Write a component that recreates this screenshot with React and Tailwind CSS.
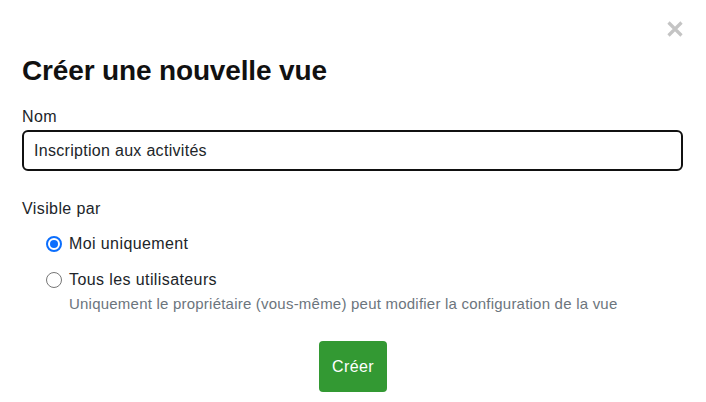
export default function App() {
  return (
    <div className="relative w-[706px] h-[402px] bg-white overflow-hidden" style={{ fontFamily: '"Liberation Sans", Arial, sans-serif' }}>
      <button className="absolute left-[665px] top-[19px] w-[20px] h-[20px] flex items-center justify-center">
        <svg width="18" height="18" viewBox="0 0 18 18">
          <path d="M2.5 2.5 L15.5 15.5 M15.5 2.5 L2.5 15.5" stroke="#c4c4c4" strokeWidth="3.2" strokeLinecap="butt" />
        </svg>
      </button>
      <div className="px-[22px] pt-[55px]">
        <h1 className="text-[28px] leading-[32px] font-bold text-[#111] tracking-[-0.15px]">Créer une nouvelle vue</h1>
        <label className="block mt-[20px] text-[16px] leading-[20px] text-[#212529] tracking-[0.4px]">Nom</label>
        <div className="mt-[3px] h-[41px] w-[661px] border-2 border-[#111] rounded-[6px] flex items-center px-[10px] text-[16px] text-[#212529] tracking-[0.3px]">
          Inscription aux activités
        </div>
        <div className="mt-[28px] text-[16px] leading-[20px] text-[#212529] tracking-[0.4px]">Visible par</div>
        <div className="mt-[13px] pl-[24px] flex flex-col">
          <div className="flex items-center h-[24px]">
            <span className="w-[16px] h-[16px] rounded-full border-[2px] border-[#0b6efd] flex items-center justify-center">
              <span className="w-[8px] h-[8px] rounded-full bg-[#0b6efd]"></span>
            </span>
            <span className="ml-[7px] text-[16px] text-[#212529] tracking-[0.4px]">Moi uniquement</span>
          </div>
          <div className="flex items-center h-[24px] mt-[12px]">
            <span className="w-[16px] h-[16px] rounded-full border border-[#767676]"></span>
            <span className="ml-[7px] text-[16px] text-[#212529] tracking-[0.4px]">Tous les utilisateurs</span>
          </div>
          <div className="ml-[23px] mt-[3px] text-[15px] leading-[18px] text-[#6c757d] tracking-[0.22px]">
            Uniquement le propriétaire (vous-même) peut modifier la configuration de la vue
          </div>
        </div>
        <div className="flex justify-center mt-[28px]">
          <button className="w-[68px] h-[51px] rounded-[4px] bg-[#339933] text-white text-[16px] tracking-[0.4px]">Créer</button>
        </div>
      </div>
    </div>
  );
}
